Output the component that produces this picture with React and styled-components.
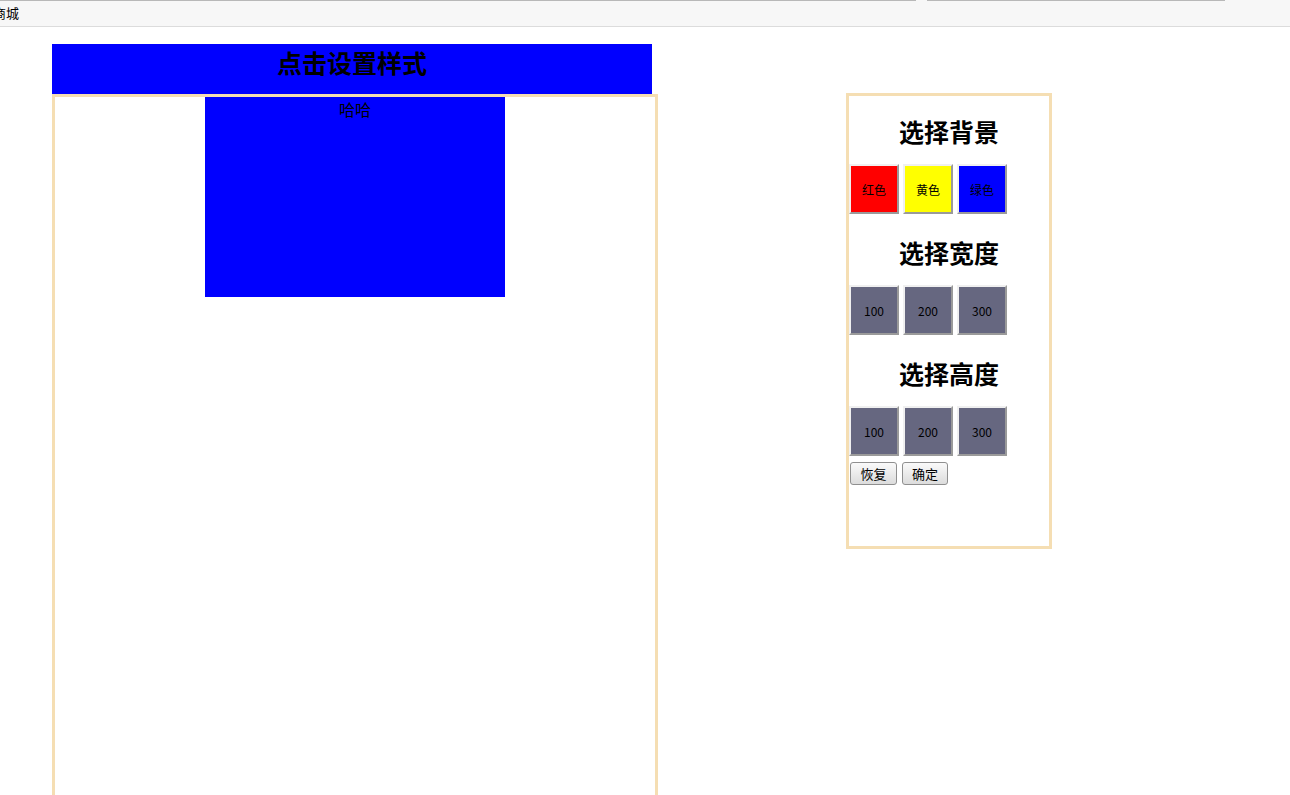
import React from "react";
import styled, { createGlobalStyle } from "styled-components";

const Global = createGlobalStyle`
  html, body { margin: 0; padding: 0; background: #fff; }
  body { font-family: "Noto Sans CJK SC", "Liberation Sans", sans-serif; color: #000; overflow: hidden; }
`;

const TopBar = styled.div`
  position: relative;
  height: 26px;
  background: #f7f7f7;
  border-bottom: 1px solid #dcdcdc;
  overflow: hidden;
`;

const Edges = styled.div`
  display: flex;
  gap: 11px;
  height: 1px;
`;

const Edge = styled.div`
  width: ${(p) => p.$w}px;
  border-top: 1px solid #b8b8b8;
`;

const TopText = styled.span`
  display: block;
  margin-left: -7px;
  font-size: 13px;
  line-height: 26px;
  margin-top: -1px;
`;

const Main = styled.div`
  display: flex;
  align-items: flex-start;
  padding: 17px 0 0 52px;
`;

const LeftCol = styled.div`
  width: 606px;
  display: flex;
  flex-direction: column;
`;

const Header = styled.div`
  width: 600px;
  height: 50px;
  background: #0000ff;
  text-align: center;
  font-size: 25px;
  font-weight: bold;
  line-height: 36px;
`;

const Stage = styled.div`
  width: 600px;
  height: 720px;
  border: 3px solid #f5deb3;
  display: flex;
  justify-content: center;
  align-items: flex-start;
`;

const Target = styled.div`
  width: 300px;
  height: 200px;
  background: #0000ff;
  text-align: center;
  font-size: 16px;
  line-height: 24px;
`;

const Panel = styled.div`
  margin-left: 188px;
  margin-top: 49px;
  width: 200px;
  height: 450px;
  border: 3px solid #f5deb3;
  display: flex;
  flex-direction: column;
`;

const Title = styled.div`
  margin: ${(p) => (p.$first ? "19px" : "18px")} 0 17px;
  text-align: center;
  font-size: 25px;
  font-weight: bold;
  line-height: 32px;
`;

const Row = styled.div`
  display: flex;
  gap: 4px;
  height: 50px;
  margin-bottom: 4px;
`;

const Swatch = styled.div`
  box-sizing: border-box;
  width: 50px;
  height: 50px;
  background: ${(p) => p.$bg};
  border: 2px solid;
  border-color: #f0f0f0 #9a9a9a #9a9a9a #f0f0f0;
  display: flex;
  align-items: center;
  justify-content: center;
  font-size: 12px;
  color: #000;
`;

const Actions = styled.div`
  display: flex;
  gap: 5px;
  margin: 2px 0 0 1px;
`;

const ActionButton = styled.button`
  box-sizing: border-box;
  height: 23px;
  width: ${(p) => p.$w}px;
  padding: 0;
  border: 1px solid #8f8f8f;
  border-radius: 3px;
  background: linear-gradient(#fafafa, #dcdcdc);
  font-family: "Noto Sans CJK SC", "Liberation Sans", sans-serif;
  font-size: 13px;
  line-height: 21px;
  color: #000;
`;

const gray = "#666780";

export default function App() {
  return (
    <>
      <Global />
      <TopBar>
        <Edges>
          <Edge $w={916} />
          <Edge $w={298} />
        </Edges>
        <TopText>商城</TopText>
      </TopBar>
      <Main>
        <LeftCol>
          <Header>点击设置样式</Header>
          <Stage>
            <Target>哈哈</Target>
          </Stage>
        </LeftCol>
        <Panel>
          <Title $first>选择背景</Title>
          <Row>
            <Swatch $bg="#ff0000">红色</Swatch>
            <Swatch $bg="#ffff00">黄色</Swatch>
            <Swatch $bg="#0000ff">绿色</Swatch>
          </Row>
          <Title>选择宽度</Title>
          <Row>
            <Swatch $bg={gray}>100</Swatch>
            <Swatch $bg={gray}>200</Swatch>
            <Swatch $bg={gray}>300</Swatch>
          </Row>
          <Title>选择高度</Title>
          <Row>
            <Swatch $bg={gray}>100</Swatch>
            <Swatch $bg={gray}>200</Swatch>
            <Swatch $bg={gray}>300</Swatch>
          </Row>
          <Actions>
            <ActionButton $w={47}>恢复</ActionButton>
            <ActionButton $w={46}>确定</ActionButton>
          </Actions>
        </Panel>
      </Main>
    </>
  );
}
